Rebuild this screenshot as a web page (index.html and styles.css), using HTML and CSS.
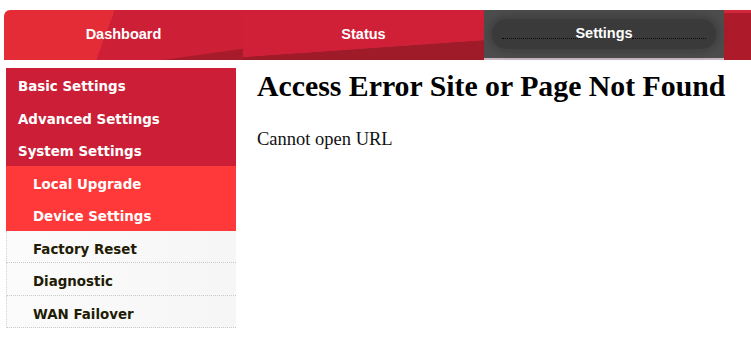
FILE: index.html
```html
<!DOCTYPE html>
<html>
<head>
<meta charset="utf-8">
<link rel="stylesheet" href="styles.css">
</head>
<body>
<div class="header">
  <div class="tab tab-dash">Dashboard</div>
  <div class="tab tab-status">Status</div>
  <div class="tab tab-settings"><span class="glow"></span><span class="label">Settings</span></div>
  <div class="tab-rest"></div>
</div>
<div class="main">
  <div class="sidebar">
    <div class="item top">Basic Settings</div>
    <div class="item top">Advanced Settings</div>
    <div class="item top">System Settings</div>
    <div class="item sub active">Local Upgrade</div>
    <div class="item sub active">Device Settings</div>
    <div class="item sub plain">Factory Reset</div>
    <div class="item sub plain">Diagnostic</div>
    <div class="item sub plain">WAN Failover</div>
  </div>
  <div class="content">
    <h1>Access Error Site or Page Not Found</h1>
    <p>Cannot open URL</p>
  </div>
</div>
</body>
</html>
```
FILE: styles.css
```css
html, body {
  margin: 0;
  padding: 0;
  background: #fff;
  overflow: hidden;
}
body {
  width: 751px;
  height: 352px;
  font-family: "Liberation Serif", serif;
}
.header {
  margin: 10px 0 0 4px;
  height: 50px;
  display: flex;
  border-top-left-radius: 6px;
  overflow: hidden;
}
.tab {
  height: 50px;
  display: flex;
  align-items: center;
  justify-content: center;
  color: #fff;
  font-family: "Liberation Sans", Arial, sans-serif;
  font-weight: bold;
  font-size: 14.5px;
  flex: none;
  box-sizing: border-box;
  padding-bottom: 3px;
}
.tab-dash {
  width: 239px;
  background:
    linear-gradient(172deg, transparent 86%, #a81b2b 87%),
    linear-gradient(110deg, #e32c36 43%, #cd1f36 43%);
}
.tab-status {
  width: 241px;
  background:
    linear-gradient(176deg, #cf2038 70%, #9f1b2a 71%);
}
.tab-settings {
  width: 240px;
  background: #4d4d4d;
  position: relative;
  border-bottom: 2px solid #c9b8c4;
}
.tab-settings .glow {
  position: absolute;
  left: 8px;
  right: 8px;
  top: 9px;
  bottom: 9px;
  border-radius: 16px;
  background: #3a3a3a;
  box-shadow: 0 0 7px 4px #404040;
}
.tab-settings .glow::before,
.tab-settings .glow::after {
  content: "";
  position: absolute;
  top: 19px;
  border-top: 1px dotted #0a0a0a;
}
.tab-settings .glow::before {
  left: 10px;
  width: 78px;
}
.tab-settings .glow::after {
  right: 10px;
  width: 74px;
}
.tab-settings .label {
  position: relative;
}
.tab-rest {
  flex: 1;
  background: linear-gradient(180deg, #d3263a 0, #d3263a 3px, #ad1a2a 3px);
}
.main {
  display: flex;
  margin-top: 8px;
}
.sidebar {
  width: 230px;
  margin-left: 6px;
  flex: none;
}
.item {
  height: 32.5px;
  line-height: 32px;
  padding-top: 3px;
  font-family: "DejaVu Sans", Verdana, sans-serif;
  font-weight: bold;
  font-size: 13.4px;
  color: #fff;
  box-sizing: border-box;
  white-space: nowrap;
}
.item.top {
  background: #cc1f37;
  padding-left: 12px;
}
.item.sub {
  padding-left: 27px;
}
.item.active {
  background: #ff3939;
}
.item.plain {
  color: #221c05;
  background: linear-gradient(90deg, #fbfbfb, #f6f6f6);
  border-left: 1px dotted #d6d6d6;
  border-bottom: 1px dotted #c8c8c8;
  padding-left: 26px;
}
.content {
  padding-left: 21px;
}
h1 {
  font-family: "Liberation Serif", "Times New Roman", serif;
  font-weight: bold;
  font-size: 29.8px;
  margin: 0;
  line-height: 34px;
  padding-top: 1px;
}
p {
  font-family: "Liberation Serif", "Times New Roman", serif;
  font-size: 18.5px;
  margin: 26px 0 0;
  color: #111;
}
```
